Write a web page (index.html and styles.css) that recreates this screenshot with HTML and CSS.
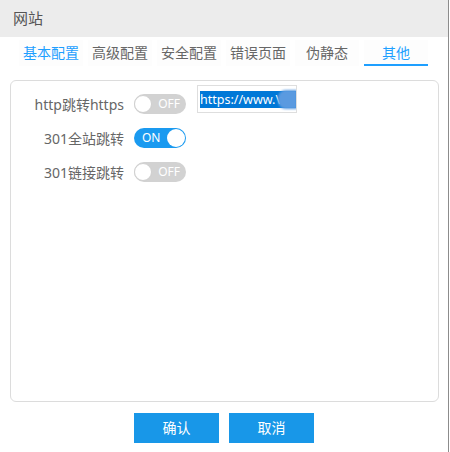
FILE: index.html
```html
<!DOCTYPE html>
<html lang="zh">
<head>
<meta charset="utf-8">
<title>网站</title>
<link rel="stylesheet" href="styles.css">
</head>
<body>
<div class="window">
  <div class="header">网站</div>
  <div class="tabs">
    <div class="tab blue">基本配置</div>
    <div class="tab">高级配置</div>
    <div class="tab">安全配置</div>
    <div class="tab">错误页面</div>
    <div class="tab">伪静态</div>
    <div class="tab blue active">其他</div>
  </div>
  <div class="panel">
    <div class="row">
      <div class="label">http跳转https</div>
      <div class="switch off"><span class="knob"></span><span class="stext">OFF</span></div>
      <div class="field"><span class="sel">https://www.\</span><span class="blob"></span></div>
    </div>
    <div class="row">
      <div class="label">301全站跳转</div>
      <div class="switch on"><span class="stext">ON</span><span class="knob"></span></div>
    </div>
    <div class="row">
      <div class="label">301链接跳转</div>
      <div class="switch off"><span class="knob"></span><span class="stext">OFF</span></div>
    </div>
  </div>
  <div class="buttons">
    <div class="btn">确认</div>
    <div class="btn">取消</div>
  </div>
</div>
</body>
</html>
```
FILE: styles.css
```css
html, body {
  margin: 0;
  padding: 0;
  background: #ffffff;
}
body {
  font-family: "Noto Sans", "Noto Sans CJK SC", sans-serif;
  font-size: 14px;
  color: #666;
}
.window {
  width: 448px;
  height: 452px;
  border-right: 1px solid #8c8c8c;
  background: #fff;
  box-sizing: content-box;
}
.header {
  height: 37px;
  line-height: 37px;
  background: #ececec;
  padding-left: 13px;
  font-size: 15px;
  color: #555;
}
.tabs {
  display: flex;
  gap: 5px;
  padding-left: 19px;
  margin-top: 3px;
  height: 26px;
}
.tab {
  width: 64px;
  height: 26px;
  line-height: 26px;
  text-align: center;
  color: #666;
  background: #fdfdfd;
  box-sizing: border-box;
}
.tab.blue {
  color: #1e9fff;
}
.tab.active {
  border-bottom: 2px solid #1e9fff;
  line-height: 25px;
}
.panel {
  margin: 14px 0 0 10px;
  width: 429px;
  height: 322px;
  border: 1px solid #dcdcdc;
  border-radius: 6px;
  box-sizing: border-box;
  padding-top: 6px;
}
.row {
  display: flex;
  align-items: center;
  height: 34px;
}
.label {
  width: 113px;
  text-align: right;
  margin-right: 10px;
  color: #666;
  white-space: nowrap;
}
.switch {
  position: relative;
  width: 52px;
  height: 20px;
  border-radius: 10px;
  box-sizing: border-box;
  display: flex;
  align-items: center;
  font-size: 12px;
  color: #fff;
}
.switch.on {
  background: #1a9af0;
  justify-content: space-between;
  padding: 0 1px 0 8px;
}
.switch.off {
  background: #d2d2d2;
  padding: 0 6px 0 0;
  justify-content: space-between;
}
.knob {
  width: 18px;
  height: 18px;
  border-radius: 50%;
  background: #fff;
  box-sizing: border-box;
}
.switch.off .knob {
  border: 1px solid #cfcfcf;
}
.stext {
  line-height: 20px;
}
.field {
  align-self: flex-start;
  margin: -2px 0 0 11px;
  width: 100px;
  height: 28px;
  border: 1px solid #dedede;
  box-sizing: border-box;
  display: flex;
  align-items: center;
  padding-left: 2px;
  overflow: hidden;
  position: relative;
}
.sel {
  background: #0078d7;
  color: #fff;
  font-size: 12.5px;
  line-height: 17px;
  height: 17px;
  width: 96px;
  white-space: nowrap;
  overflow: hidden;
}
.blob {
  position: absolute;
  left: 80px;
  top: 4px;
  width: 19px;
  height: 19px;
  border-radius: 8px 0 0 8px;
  background: #5a9ae0;
  filter: blur(1px);
}
.buttons {
  display: flex;
  justify-content: center;
  gap: 10px;
  margin-top: 11px;
}
.btn {
  width: 85px;
  height: 30px;
  line-height: 30px;
  text-align: center;
  background: #1897e8;
  color: #fff;
  font-size: 14px;
}
```
